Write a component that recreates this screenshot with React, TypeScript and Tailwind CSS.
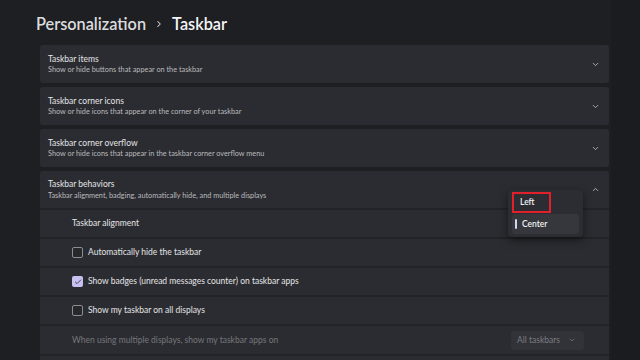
import { ChevronDown, ChevronUp, ChevronRight, Check } from "lucide-react"

const font = { fontFamily: 'Lato, "Noto Sans", sans-serif' }

function Card({ title, sub }: { title: string; sub: string }) {
  return (
    <div className="h-[38px] rounded-[3px] bg-[#2b2c31] pl-[8px] pr-[9px] flex items-center justify-between">
      <div className="flex flex-col leading-none">
        <span className="text-[8.5px] text-[#e4e4e6]">{title}</span>
        <span className="text-[7.3px] text-[#b9babd] mt-[3px]">{sub}</span>
      </div>
      <ChevronDown size={9} strokeWidth={2} className="text-[#d0d0d4]" />
    </div>
  )
}

function Box({ checked }: { checked?: boolean }) {
  return checked ? (
    <div className="w-[11px] h-[11px] rounded-[2px] bg-[#c6c1f1] flex items-center justify-center">
      <Check size={8} strokeWidth={2.5} className="text-[#2b2a44]" />
    </div>
  ) : (
    <div className="w-[11px] h-[11px] rounded-[2px] border border-[#8c8d91] bg-[#27282c]" />
  )
}

export default function App() {
  const rows = [
    { label: "Automatically hide the taskbar", checked: false },
    { label: "Show badges (unread messages counter) on taskbar apps", checked: true },
    { label: "Show my taskbar on all displays", checked: false },
  ]

  return (
    <div style={font} className="w-[640px] h-[360px] overflow-hidden bg-[#1e1f23] flex">
      <div className="w-[611px] pl-[36px] pr-[2px]">
        <div className="h-[45px] flex items-center gap-[8px] pt-[3px]">
          <span className="text-[16.3px] font-semibold text-[#dcdcde] leading-none">Personalization</span>
          <ChevronRight size={10} strokeWidth={2.5} className="text-[#d8d8da]" />
          <span className="text-[16.3px] font-semibold text-[#f4f4f6] leading-none">Taskbar</span>
        </div>

        <div className="ml-[4px] flex flex-col gap-[4px]">
          <Card title="Taskbar items" sub="Show or hide buttons that appear on the taskbar" />
          <Card title="Taskbar corner icons" sub="Show or hide icons that appear on the corner of your taskbar" />
          <Card title="Taskbar corner overflow" sub="Show or hide icons that appear in the taskbar corner overflow menu" />

          <div className="rounded-[3px] bg-[#2b2c31] flex flex-col">
            <div className="h-[37px] pl-[8px] pr-[9px] flex items-center justify-between">
              <div className="flex flex-col leading-none">
                <span className="text-[8.5px] text-[#e4e4e6]">Taskbar behaviors</span>
                <span className="text-[7.3px] text-[#b9babd] mt-[3px]">
                  Taskbar alignment, badging, automatically hide, and multiple displays
                </span>
              </div>
              <ChevronUp size={9} strokeWidth={2} className="text-[#d0d0d4]" />
            </div>

            <div className="relative h-[29px] border-t-2 border-[#222327] pl-[32px] flex items-center">
              <span className="text-[8.5px] text-[#e4e4e6]">Taskbar alignment</span>
              <div className="absolute left-[468px] top-[-20px] w-[75px] h-[47px] rounded-[4px] bg-[#2c2d32] shadow-[0_3px_8px_rgba(0,0,0,0.5)] px-[4px] py-[2px] flex flex-col gap-[1px]">
                <div className="h-[21px] w-[39px] border-2 border-[#e0212b] flex items-center pl-[6px]">
                  <span className="text-[8.5px] font-semibold text-[#f0f0f2]">Left</span>
                </div>
                <div className="h-[20px] rounded-[3px] bg-[#36373c] flex items-center gap-[5px] pl-[3px]">
                  <div className="w-[2px] h-[10px] rounded-full bg-[#d6d4f4]" />
                  <span className="text-[8.5px] font-semibold text-[#f0f0f2]">Center</span>
                </div>
              </div>
            </div>

            {rows.map((r, i) => (
              <div key={i} className="h-[29px] border-t-2 border-[#222327] pl-[32px] flex items-center gap-[5px]">
                <Box checked={r.checked} />
                <span className="text-[8.5px] text-[#e4e4e6]">{r.label}</span>
              </div>
            ))}

            <div className="h-[30px] border-t-2 border-[#222327] pl-[32px] pr-[25px] flex items-center justify-between">
              <span className="text-[8.5px] text-[#76777b]">When using multiple displays, show my taskbar apps on</span>
              <div className="w-[73px] h-[19px] rounded-[3px] bg-[#323338] flex items-center justify-between pl-[6px] pr-[8px]">
                <span className="text-[8.5px] text-[#7c7d81]">All taskbars</span>
                <ChevronDown size={8} strokeWidth={2} className="text-[#808185]" />
              </div>
            </div>

            <div className="h-[30px] border-t-2 border-[#222327]" />
          </div>
        </div>
      </div>
      <div className="flex-1 bg-[#1b1c20]" />
    </div>
  )
}
